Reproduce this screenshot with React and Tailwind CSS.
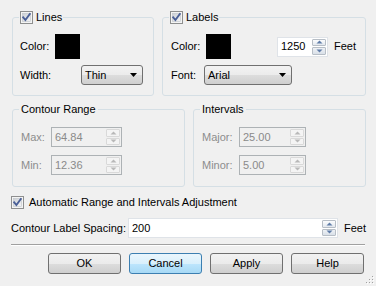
import React from "react";

function Check() {
  return (
    <svg width="13" height="13" viewBox="0 0 13 13" className="shrink-0">
      <defs>
        <linearGradient id="cbg" x1="0" y1="0" x2="1" y2="1">
          <stop offset="0" stopColor="#cbcfd5" />
          <stop offset="1" stopColor="#f6f6f6" />
        </linearGradient>
      </defs>
      <rect x="0.5" y="0.5" width="12" height="12" fill="#f4f4f4" stroke="#8e8f8f" />
      <rect x="2.5" y="2.5" width="8" height="8" fill="url(#cbg)" stroke="#bfc3c9" strokeWidth="0.6" />
      <path d="M3.2 6.4 L5.4 9 L9.8 3" fill="none" stroke="#4a5f97" strokeWidth="1.9" strokeLinecap="square" />
    </svg>
  );
}

function Arrow({ up, color }) {
  return (
    <svg width="7" height="4" viewBox="0 0 7 4">
      <path d={up ? "M0.5 3.5 L3.5 0.5 L6.5 3.5 Z" : "M0.5 0.5 L3.5 3.5 L6.5 0.5 Z"} fill={color} />
    </svg>
  );
}

function Spin({ value, w, disabled }) {
  return (
    <div
      className={
        "flex h-[20px] border shrink-0 " +
        (disabled ? "border-[#adb2b5] bg-[#f0f0f0] text-[#8a8a8a]" : "border-[#dfe3e8] bg-white text-black")
      }
      style={{ width: w }}
    >
      <div className="flex-1 flex items-center pl-[3px] leading-none">{value}</div>
      <div className="flex flex-col w-[15px] gap-[1px] py-[1px] pr-[1px]">
        <div
          className={
            "flex-1 flex items-center justify-center border rounded-[1px] " +
            (disabled ? "border-[#d9d9d9] bg-[#f4f4f4]" : "border-[#b7bec6] bg-gradient-to-b from-[#fbfcfd] to-[#e3e8ee]")
          }
        >
          <Arrow up color={disabled ? "#b8b8b8" : "#5f7ca8"} />
        </div>
        <div
          className={
            "flex-1 flex items-center justify-center border rounded-[1px] " +
            (disabled ? "border-[#d9d9d9] bg-[#f4f4f4]" : "border-[#b7bec6] bg-gradient-to-b from-[#eef1f5] to-[#d9e0e8]")
          }
        >
          <Arrow color={disabled ? "#b8b8b8" : "#5f7ca8"} />
        </div>
      </div>
    </div>
  );
}

function Combo({ value, w }) {
  return (
    <div
      className="h-[20px] shrink-0 flex items-center border border-[#707070] rounded-[3px] bg-[linear-gradient(#f2f2f2_0%,#ebebeb_50%,#dddddd_50%,#cfcfcf_100%)] pl-[3px] pr-[5px]"
      style={{ width: w }}
    >
      <span className="flex-1 leading-none">{value}</span>
      <svg width="7" height="4" viewBox="0 0 7 4">
        <path d="M0 0 L7 0 L3.5 4 Z" fill="#000" />
      </svg>
    </div>
  );
}

function Button({ children, focused }) {
  return (
    <div
      className={
        "w-[73px] h-[21px] flex items-center justify-center rounded-[3px] border " +
        (focused
          ? "border-[#3c7fb1] bg-[linear-gradient(#eaf6fd_0%,#d9f0fc_50%,#bee6fd_50%,#a7d9f5_100%)]"
          : "border-[#707070] bg-[linear-gradient(#f2f2f2_0%,#ebebeb_50%,#dddddd_50%,#cfcfcf_100%)]")
      }
    >
      {children}
    </div>
  );
}

function GroupTitle({ children }) {
  return (
    <div className="-mt-[8px] ml-[6px] self-start bg-[#f0f0f0] h-[14px] px-[1px] flex items-center gap-[3px] leading-[14px]">
      {children}
    </div>
  );
}

export default function App() {
  return (
    <div className="w-[376px] h-[286px] bg-[#f0f0f0] text-[11px] whitespace-nowrap text-black font-['Liberation_Sans',Arial,sans-serif] relative overflow-hidden">
      <div className="flex flex-col pt-[17px]">
        <div className="flex gap-[8px] pl-[12px]">
          <div className="w-[142px] flex flex-col border border-[#d5dfe5] rounded-[3px]">
            <GroupTitle>
              <Check />
              <span>Lines</span>
            </GroupTitle>
            <div className="flex flex-col pl-[7px] pt-[10px] pb-[10px] gap-[6px]">
              <div className="flex items-center h-[25px]">
                <span className="w-[35px]">Color:</span>
                <div className="w-[25px] h-[25px] bg-black" />
              </div>
              <div className="flex items-center h-[20px]">
                <span className="w-[61px]">Width:</span>
                <Combo value="Thin" w={62} />
              </div>
            </div>
          </div>
          <div className="w-[204px] flex flex-col border border-[#d5dfe5] rounded-[3px]">
            <GroupTitle>
              <Check />
              <span>Labels</span>
            </GroupTitle>
            <div className="flex flex-col pl-[8px] pt-[10px] pb-[10px] gap-[6px]">
              <div className="flex items-center h-[25px]">
                <span className="w-[35px]">Color:</span>
                <div className="w-[25px] h-[25px] bg-black" />
                <div className="ml-[46px]">
                  <Spin value="1250" w={51} />
                </div>
                <span className="ml-[6px]">Feet</span>
              </div>
              <div className="flex items-center h-[20px]">
                <span className="w-[33px]">Font:</span>
                <Combo value="Arial" w={88} />
              </div>
            </div>
          </div>
        </div>

        <div className="flex gap-[8px] pl-[12px] mt-[13px]">
          <div className="w-[173px] flex flex-col border border-[#d5dfe5] rounded-[3px]">
            <GroupTitle>
              <span className="px-[1px]">Contour Range</span>
            </GroupTitle>
            <div className="flex flex-col pl-[8px] pt-[11px] pb-[11px] gap-[8px] text-[#8d8d8d]">
              <div className="flex items-center">
                <span className="w-[30px]">Max:</span>
                <Spin value="64.84" w={71} disabled />
              </div>
              <div className="flex items-center">
                <span className="w-[30px]">Min:</span>
                <Spin value="12.36" w={71} disabled />
              </div>
            </div>
          </div>
          <div className="w-[173px] flex flex-col border border-[#d5dfe5] rounded-[3px]">
            <GroupTitle>
              <span className="px-[1px]">Intervals</span>
            </GroupTitle>
            <div className="flex flex-col pl-[8px] pt-[11px] pb-[11px] gap-[8px] text-[#8d8d8d]">
              <div className="flex items-center">
                <span className="w-[37px]">Major:</span>
                <Spin value="25.00" w={67} disabled />
              </div>
              <div className="flex items-center">
                <span className="w-[37px]">Minor:</span>
                <Spin value="5.00" w={67} disabled />
              </div>
            </div>
          </div>
        </div>

        <div className="flex items-center gap-[5px] pl-[11px] mt-[9px] h-[13px]">
          <Check />
          <span>Automatic Range and Intervals Adjustment</span>
        </div>

        <div className="flex items-center pl-[11px] mt-[9px]">
          <span className="w-[117px]">Contour Label Spacing:</span>
          <Spin value="200" w={210} />
          <span className="ml-[6px]">Feet</span>
        </div>

        <div className="mx-[11px] mt-[6px] h-[1px] bg-[#a0a0a0] border-b border-white box-content" />

        <div className="flex justify-end gap-[8px] pr-[12px] mt-[7px]">
          <Button>OK</Button>
          <Button focused>Cancel</Button>
          <Button>Apply</Button>
          <Button>Help</Button>
        </div>
      </div>

      <svg className="absolute right-[1px] bottom-[1px]" width="10" height="10" viewBox="0 0 10 10">
        {[
          [8, 2], [8, 5], [5, 5], [8, 8], [5, 8], [2, 8],
        ].map(([x, y], i) => (
          <g key={i}>
            <rect x={x} y={y} width="1" height="1" fill="#fff" />
            <rect x={x - 1} y={y - 1} width="1" height="1" fill="#a0a0a0" />
          </g>
        ))}
      </svg>
    </div>
  );
}
